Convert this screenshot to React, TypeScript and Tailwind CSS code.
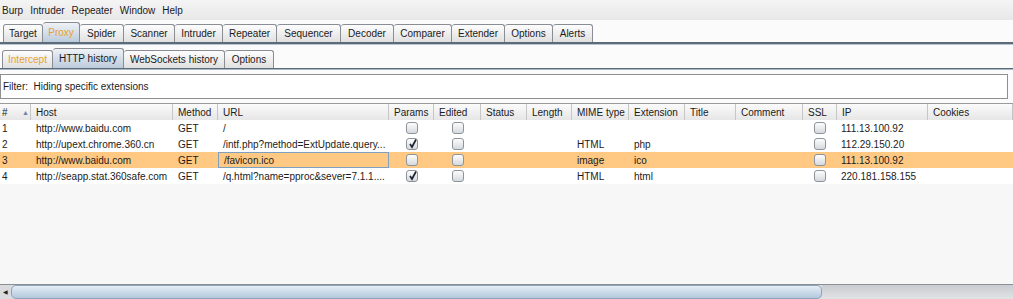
import React from "react";

const topTabs = [
  { label: "Target", w: "w-[40px]" },
  { label: "Proxy", w: "w-[37px]", selected: true },
  { label: "Spider", w: "w-[44px]" },
  { label: "Scanner", w: "w-[51px]" },
  { label: "Intruder", w: "w-[48px]" },
  { label: "Repeater", w: "w-[54px]" },
  { label: "Sequencer", w: "w-[64px]" },
  { label: "Decoder", w: "w-[53px]" },
  { label: "Comparer", w: "w-[58px]" },
  { label: "Extender", w: "w-[53px]" },
  { label: "Options", w: "w-[48px]" },
  { label: "Alerts", w: "w-[40px]" },
];

const subTabs = [
  { label: "Intercept", w: "w-[51px]", orange: true },
  { label: "HTTP history", w: "w-[71px]", selected: true },
  { label: "WebSockets history", w: "w-[101px]" },
  { label: "Options", w: "w-[49px]" },
];

const columns = [
  { label: "#", w: "w-[31px]", pad: "pl-[2px]" },
  { label: "Host", w: "w-[142px]" },
  { label: "Method", w: "w-[45px]" },
  { label: "URL", w: "w-[171px]" },
  { label: "Params", w: "w-[45px]" },
  { label: "Edited", w: "w-[47px]" },
  { label: "Status", w: "w-[46px]" },
  { label: "Length", w: "w-[45px]" },
  { label: "MIME type", w: "w-[57px]" },
  { label: "Extension", w: "w-[56px]" },
  { label: "Title", w: "w-[51px]" },
  { label: "Comment", w: "w-[67px]" },
  { label: "SSL", w: "w-[34px]" },
  { label: "IP", w: "w-[91px]" },
  { label: "Cookies", w: "w-[85px]" },
];

const rows = [
  { id: 1, host: "http://www.baidu.com", url: "/", params: false, mime: "", ext: "", ip: "111.13.100.92" },
  { id: 2, host: "http://upext.chrome.360.cn", url: "/intf.php?method=ExtUpdate.query...", params: true, mime: "HTML", ext: "php", ip: "112.29.150.20" },
  { id: 3, host: "http://www.baidu.com", url: "/favicon.ico", params: false, mime: "image", ext: "ico", ip: "111.13.100.92", selected: true },
  { id: 4, host: "http://seapp.stat.360safe.com", url: "/q.html?name=pproc&sever=7.1.1....", params: true, mime: "HTML", ext: "html", ip: "220.181.158.155" },
];

function Check({ checked }: { checked: boolean }) {
  return (
    <div className="relative size-[12px] rounded-[3px] border border-[#8d949c] bg-linear-to-b from-[#fdfdfd] to-[#d6dade]">
      {checked ? (
        <svg viewBox="0 0 12 12" className="absolute -top-px left-0 size-[12px]">
          <path d="M3 6 L5 9 L9 1.5" fill="none" stroke="#1d2633" strokeWidth="1.7" />
        </svg>
      ) : null}
    </div>
  );
}

function Tab({ label, w, selected, orange }: { label: string; w: string; selected?: boolean; orange?: boolean }) {
  return (
    <div
      className={`${w} flex shrink-0 items-center justify-center rounded-t-[3px] border-t border-r border-[#8a8e94] first:border-l ${
        selected
          ? "h-[20px] bg-linear-to-b from-[#eef2f6] to-[#bccbdb]"
          : "h-[18px] bg-linear-to-b from-[#fdfdfd] to-[#e0e0e0]"
      } ${orange ? "text-[#e8a030]" : "text-[#1b1b1b]"}`}
    >
      {label}
    </div>
  );
}

export default function App() {
  return (
    <div className="flex h-[299px] w-[1013px] flex-col overflow-hidden bg-[#fbfbfb] font-['Liberation_Sans',Arial,sans-serif] text-[10px] text-[#1b1b1b]">
      <div className="flex h-[20px] items-center gap-[7px] bg-linear-to-b from-[#f4f4f4] to-[#e8e8e8] pl-[2px]">
        <span>Burp</span>
        <span>Intruder</span>
        <span>Repeater</span>
        <span>Window</span>
        <span>Help</span>
      </div>

      <div className="flex h-[22px] items-end pl-[3px]">
        {topTabs.map((t) => (
          <Tab key={t.label} label={t.label} w={t.w} selected={t.selected} orange={t.selected} />
        ))}
      </div>
      <div className="h-[3px] border-t-2 border-[#5d6a78] bg-[#b7c6d5]" />

      <div className="flex h-[23px] items-end pl-[2px]">
        {subTabs.map((t) => (
          <Tab key={t.label} label={t.label} w={t.w} selected={t.selected} orange={t.orange} />
        ))}
      </div>
      <div className="h-[2px] border-t border-[#5d6a78] bg-[#a9b8c8]" />

      <div className="mt-[4px] mr-[5px] flex h-[25px] items-center border border-[#8f8f8f] bg-white pl-[2px]">
        Filter:&nbsp; Hiding specific extensions
      </div>

      <div className="mt-[4px] flex h-[17px] border-t border-[#9a9a9a] bg-linear-to-b from-[#fbfbfb] to-[#e6e6e6]">
        {columns.map((c) => (
          <div
            key={c.label}
            className={`${c.w} relative flex shrink-0 items-center border-r border-[#c6c6c6] ${c.pad ?? "pl-[5px]"}`}
          >
            {c.label}
            {c.label === "#" ? (
              <span className="absolute left-[22px] top-[5px] text-[7px] leading-none text-[#6e86a0]">▲</span>
            ) : null}
          </div>
        ))}
      </div>

      <div className="flex flex-col bg-white">
        {rows.map((r) => (
          <div key={r.id} className={`flex h-[16px] items-center ${r.selected ? "bg-[#ffc984]" : ""}`}>
            <div className="w-[31px] shrink-0 pl-[2px]">{r.id}</div>
            <div className="w-[142px] shrink-0 pl-[5px]">{r.host}</div>
            <div className="w-[45px] shrink-0 pl-[5px]">GET</div>
            <div
              className={`flex h-full w-[171px] shrink-0 items-center pl-[5px] ${
                r.selected ? "border border-[#7d9fc0] pl-[4px]" : ""
              }`}
            >
              {r.url}
            </div>
            <div className="flex w-[45px] shrink-0 justify-center">
              <Check checked={r.params} />
            </div>
            <div className="flex w-[47px] shrink-0 justify-center">
              <Check checked={false} />
            </div>
            <div className="w-[46px] shrink-0" />
            <div className="w-[45px] shrink-0" />
            <div className="w-[57px] shrink-0 pl-[5px]">{r.mime}</div>
            <div className="w-[56px] shrink-0 pl-[5px]">{r.ext}</div>
            <div className="w-[51px] shrink-0" />
            <div className="w-[67px] shrink-0" />
            <div className="flex w-[34px] shrink-0 justify-center">
              <Check checked={false} />
            </div>
            <div className="w-[91px] shrink-0 pl-[4px]">{r.ip}</div>
            <div className="w-[85px] shrink-0" />
          </div>
        ))}
      </div>
      <div className="flex-1 bg-[#f7f7f7]" />

      <div className="flex h-[15px] items-center border-t border-[#8a8f96] bg-[#d9dbde]">
        <div className="flex h-full w-[11px] items-center justify-center text-[6px] text-[#222]">◀</div>
        <div className="h-full w-[811px] rounded-[5px] border border-[#8ea4bb] bg-linear-to-b from-[#e5eef7] to-[#b3c8dc]" />
        <div className="h-full flex-1 bg-linear-to-b from-[#c9ccd0] to-[#e2e3e5]" />
      </div>
    </div>
  );
}
